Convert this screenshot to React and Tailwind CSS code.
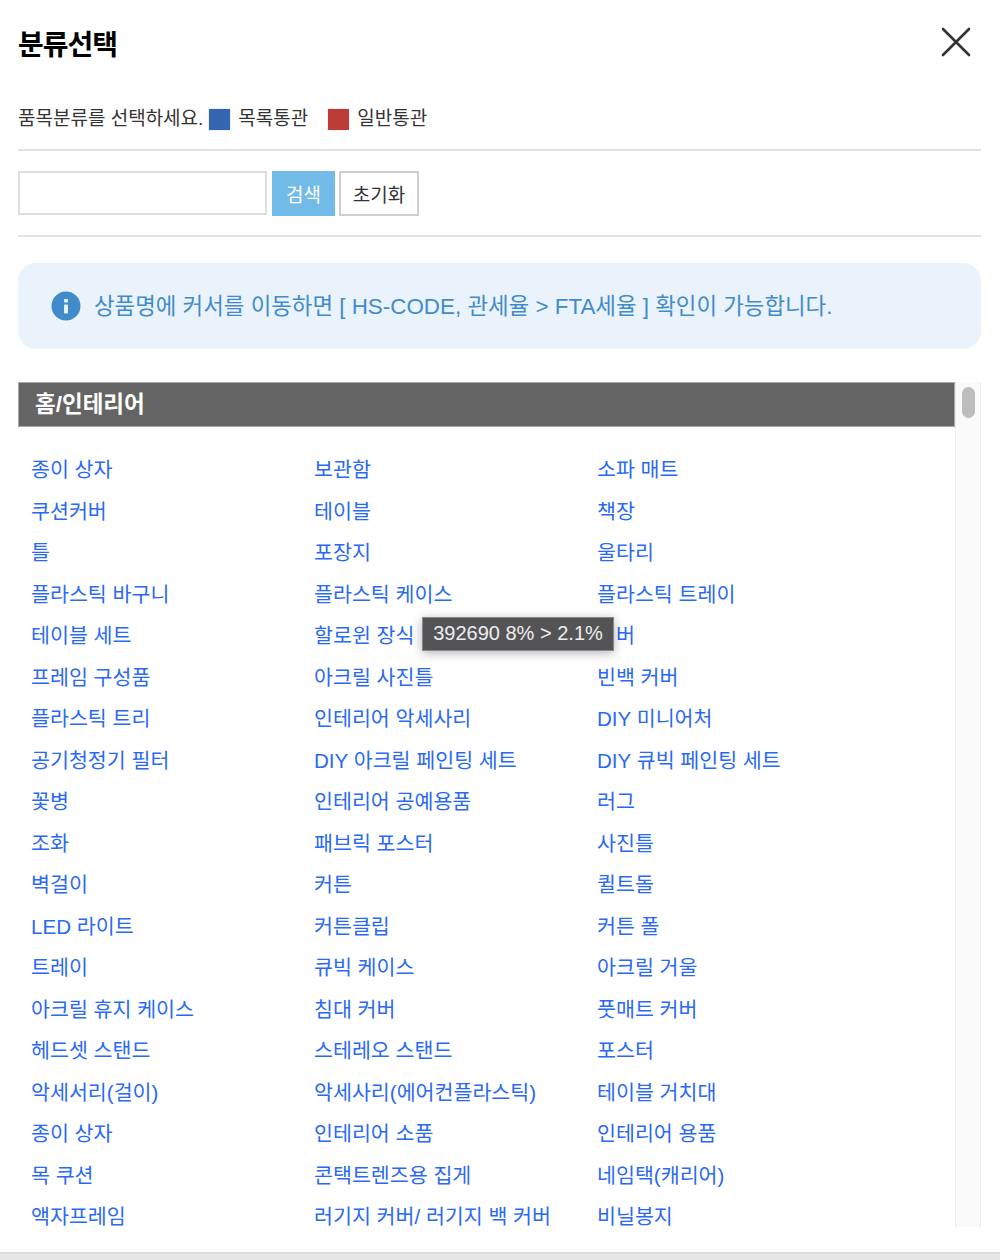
const rows = [
  ["종이 상자", "보관함", "소파 매트"],
  ["쿠션커버", "테이블", "책장"],
  ["틀", "포장지", "울타리"],
  ["플라스틱 바구니", "플라스틱 케이스", "플라스틱 트레이"],
  ["테이블 세트", "할로윈 장식", "커버"],
  ["프레임 구성품", "아크릴 사진틀", "빈백 커버"],
  ["플라스틱 트리", "인테리어 악세사리", "DIY 미니어처"],
  ["공기청정기 필터", "DIY 아크릴 페인팅 세트", "DIY 큐빅 페인팅 세트"],
  ["꽃병", "인테리어 공예용품", "러그"],
  ["조화", "패브릭 포스터", "사진틀"],
  ["벽걸이", "커튼", "퀼트돌"],
  ["LED 라이트", "커튼클립", "커튼 폴"],
  ["트레이", "큐빅 케이스", "아크릴 거울"],
  ["아크릴 휴지 케이스", "침대 커버", "풋매트 커버"],
  ["헤드셋 스탠드", "스테레오 스탠드", "포스터"],
  ["악세서리(걸이)", "악세사리(에어컨플라스틱)", "테이블 거치대"],
  ["종이 상자", "인테리어 소품", "인테리어 용품"],
  ["목 쿠션", "콘택트렌즈용 집게", "네임택(캐리어)"],
  ["액자프레임", "러기지 커버/ 러기지 백 커버", "비닐봉지"],
];

export default function App() {
  return (
    <div className="relative h-[1260px] w-[1000px] overflow-hidden bg-white font-['Liberation_Sans','Noto_Sans_CJK_KR',sans-serif]">
      <div className="pl-[18px] pr-[19px]">
        <div className="flex h-[90px] items-center justify-between">
          <h1 className="pt-[1px] text-[28px] font-bold leading-none tracking-[-1px] text-black">분류선택</h1>
          <button className="mb-[7px] mr-[10px] text-[#333]">
            <svg width="30" height="30" viewBox="0 0 30 30" fill="none" stroke="currentColor" strokeWidth="2.6" strokeLinecap="round">
              <path d="M2 2 L28 28 M28 2 L2 28" />
            </svg>
          </button>
        </div>
        <div className="flex h-[61px] items-center border-b-2 border-[#e2e2e2] text-[19px] text-[#333]">
          <span>품목분류를 선택하세요.</span>
          <span className="ml-[5px] h-[23px] w-[23px] border border-[#eef] bg-[#3366b0]" />
          <span className="ml-[7px]">목록통관</span>
          <span className="ml-[19px] h-[23px] w-[23px] border border-[#fee] bg-[#bb3d35]" />
          <span className="ml-[7px]">일반통관</span>
        </div>
        <div className="flex h-[86px] items-center border-b-2 border-[#e2e2e2]">
          <input className="h-[44px] w-[249px] border-2 border-[#dedede] bg-white" />
          <button className="ml-[5px] h-[45px] w-[63px] bg-[#72bbe9] pt-[6px] text-[19px] text-white">검색</button>
          <button className="ml-[4px] h-[45px] w-[80px] border-2 border-[#cfcfcf] bg-white pt-[6px] text-[19px] text-[#333]">초기화</button>
        </div>
        <div className="mt-[26px] flex h-[86px] items-center rounded-[18px] bg-[#eaf3fb] pl-[33px] text-[22.4px] text-[#428bca]">
          <svg width="30" height="30" viewBox="0 0 30 30" className="mr-[13px] shrink-0">
            <circle cx="15" cy="15" r="14.5" fill="#428bca" />
            <rect x="13" y="8" width="4" height="3.5" rx="1" fill="#eaf3fb" />
            <rect x="13" y="13.5" width="4" height="9" rx="1" fill="#eaf3fb" />
          </svg>
          <span className="pt-[1px]">상품명에 커서를 이동하면 [ HS-CODE, 관세율 &gt; FTA세율 ] 확인이 가능합니다.</span>
        </div>
        <div className="relative mt-[33px] flex h-[845px] overflow-hidden">
          <div className="w-[937px] shrink-0">
            <div className="flex h-[45px] items-center border border-[#a8a8a8] bg-[#646464] pl-[16px] pt-[1px] text-[22.5px] font-bold text-white">
              홈/인테리어
            </div>
            <div className="pl-[13px] pt-[23px]">
              {rows.map((r, i) => (
                <div key={i} className="grid h-[41.5px] grid-cols-[283px_283px_1fr] items-center text-[20.6px] leading-none text-[#2a69f5]">
                  {r.map((t, j) => (
                    <a key={j}>{t}</a>
                  ))}
                </div>
              ))}
            </div>
          </div>
          <div className="flex-1 border-x border-[#ececec] bg-[#fafafa] pt-[5px]">
            <div className="ml-[6px] h-[31px] w-[13px] rounded-full bg-[#bdbdbd]" />
          </div>
          <div className="absolute left-[404px] top-[235px] flex h-[34px] w-[192px] items-center justify-center border border-[#888] bg-[#545456] pb-[3px] text-[20px] text-[#eee] shadow-[0_2px_10px_rgba(0,0,0,0.3)]">
            392690 8% &gt; 2.1%
          </div>
        </div>
      </div>
      <div className="absolute inset-x-0 bottom-0 h-[8px] border-t-2 border-[#dcdcdc] bg-[#e6e6e6]" />
    </div>
  );
}
